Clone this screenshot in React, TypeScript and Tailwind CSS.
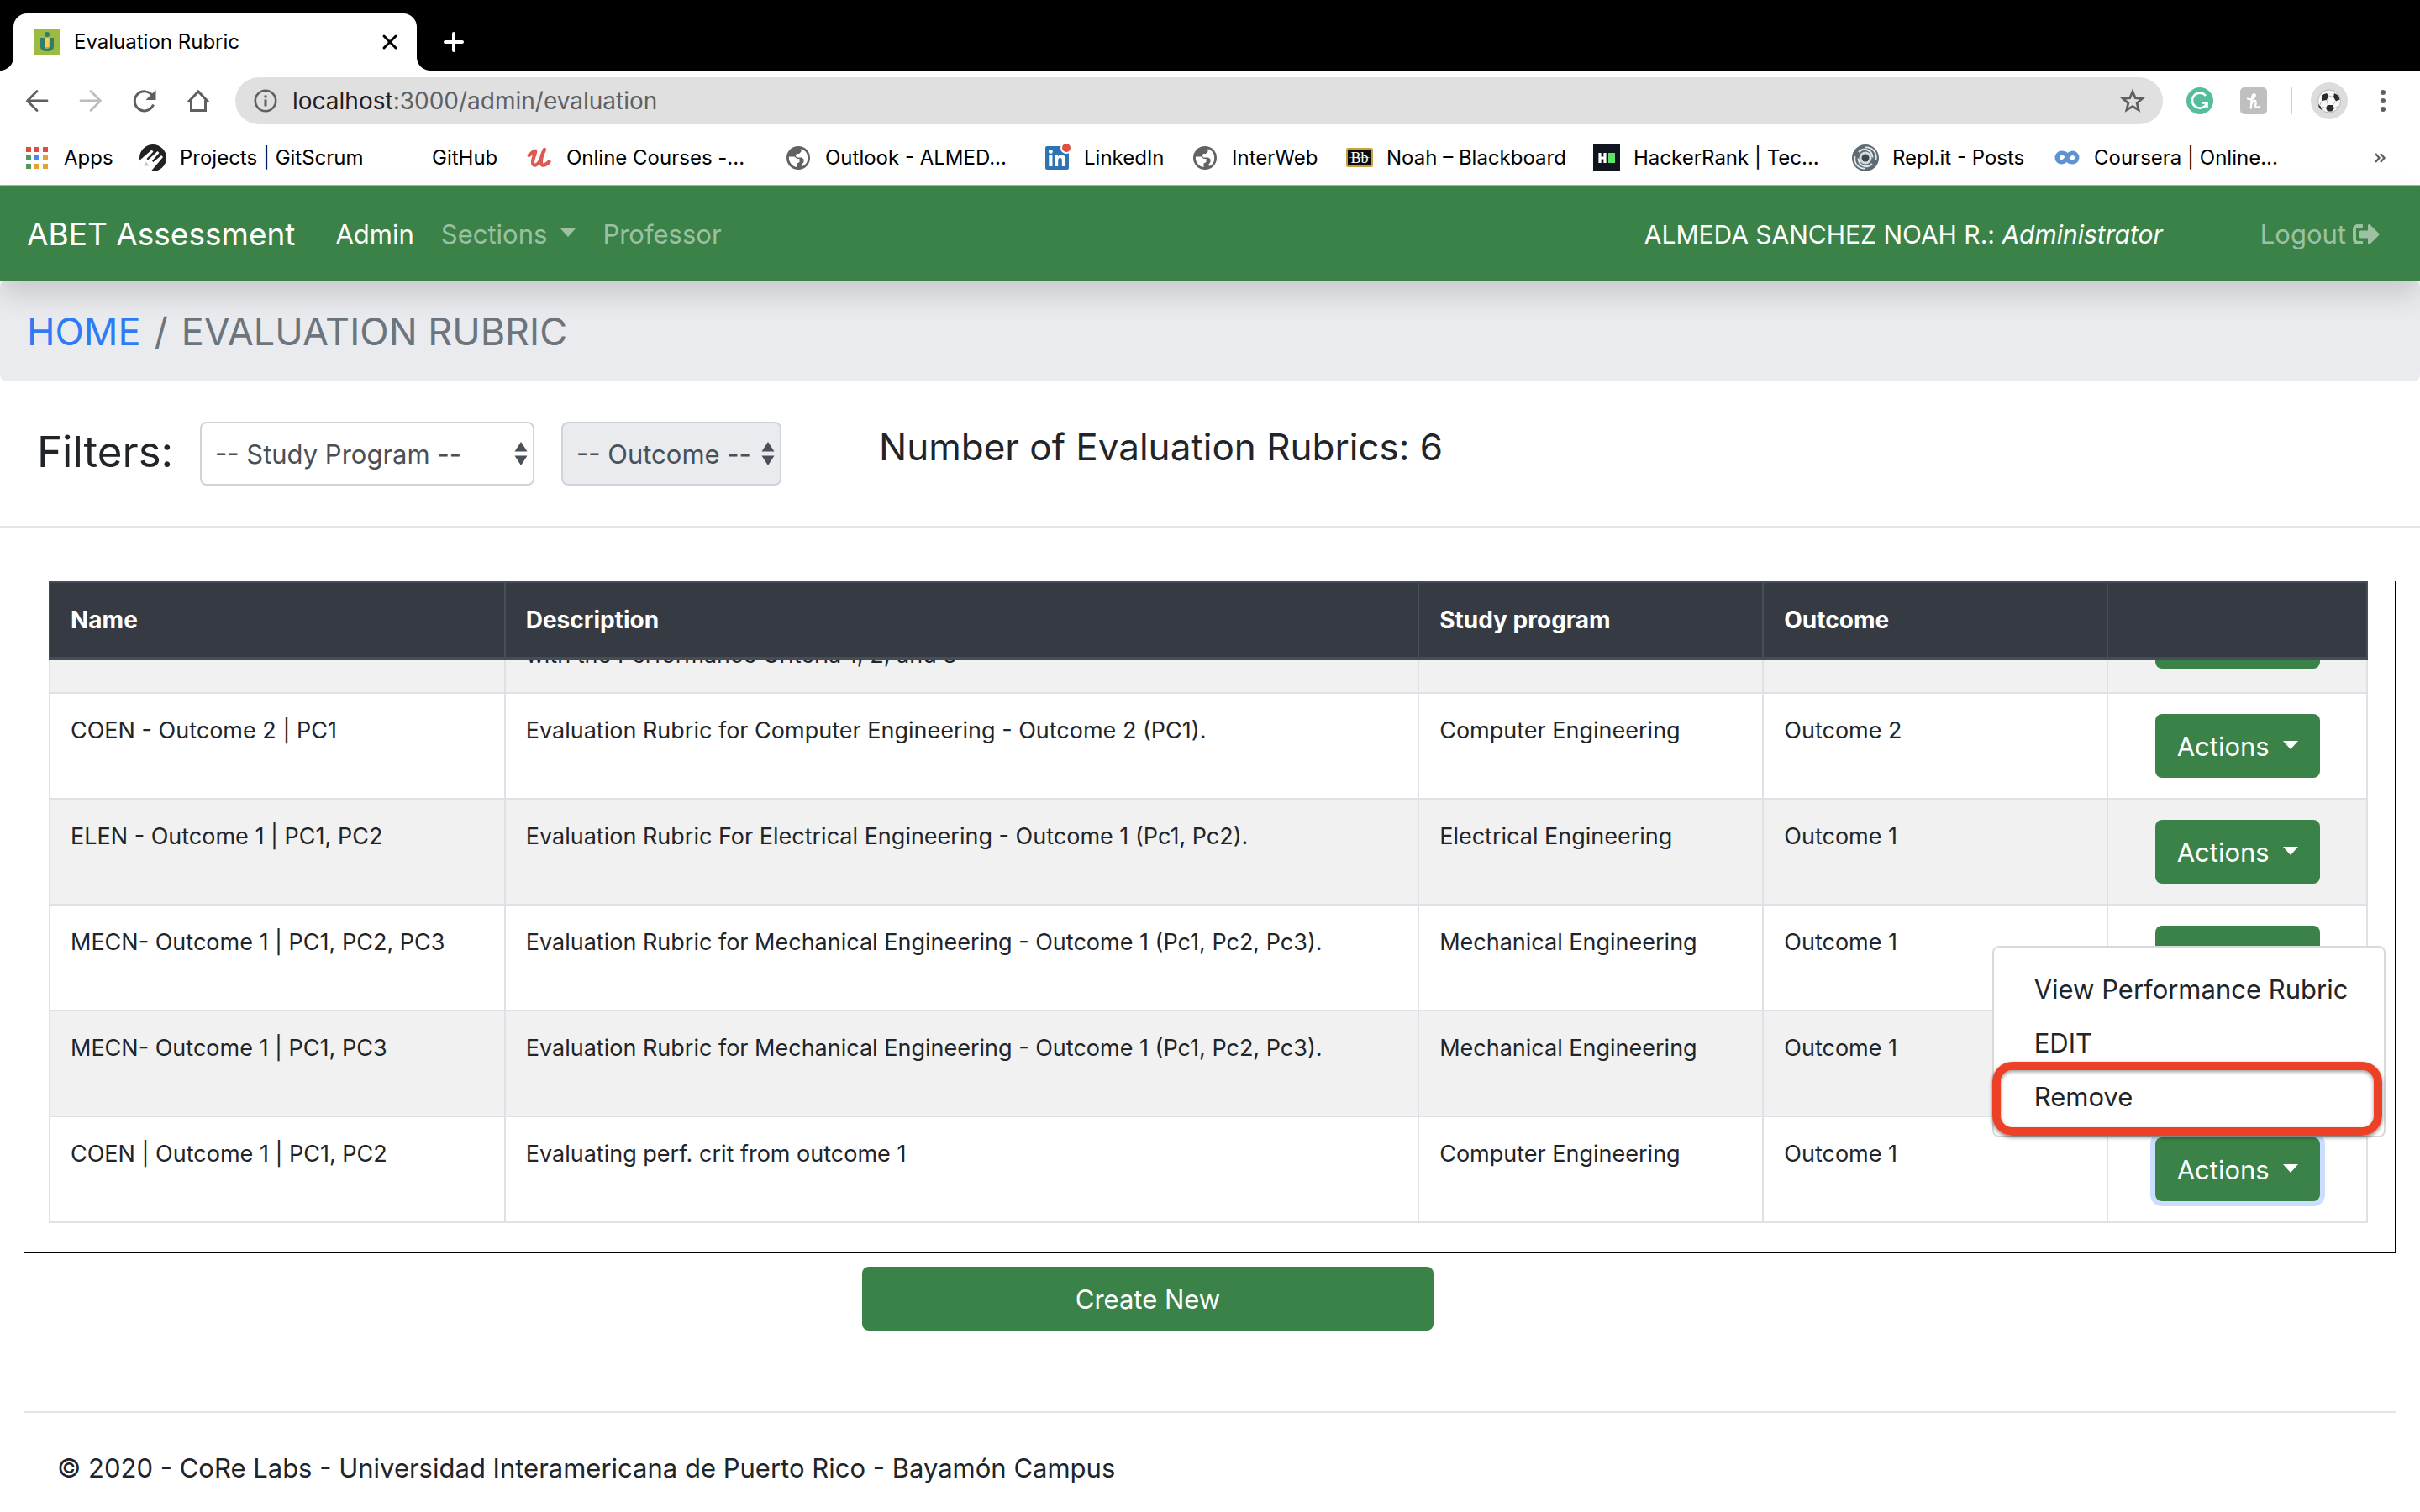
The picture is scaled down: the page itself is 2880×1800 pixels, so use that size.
import { useLayoutEffect, useRef, type ReactNode } from "react";
import { FaLinkedin, FaSignOutAlt } from "react-icons/fa";

const rows = [
  {
    id: 1,
    name: "",
    description: ["\u00a0", "with the Performance Criteria 1, 2, and 3"],
    program: "",
    outcome: "",
  },
  {
    id: 2,
    name: "COEN - Outcome 2 | PC1",
    description: ["Evaluation Rubric for Computer Engineering - Outcome 2 (PC1)."],
    program: "Computer Engineering",
    outcome: "Outcome 2",
  },
  {
    id: 3,
    name: "ELEN - Outcome 1 | PC1, PC2",
    description: ["Evaluation Rubric For Electrical Engineering - Outcome 1 (Pc1, Pc2)."],
    program: "Electrical Engineering",
    outcome: "Outcome 1",
  },
  {
    id: 4,
    name: "MECN- Outcome 1 | PC1, PC2, PC3",
    description: ["Evaluation Rubric for Mechanical Engineering - Outcome 1 (Pc1, Pc2, Pc3)."],
    program: "Mechanical Engineering",
    outcome: "Outcome 1",
  },
  {
    id: 5,
    name: "MECN- Outcome 1 | PC1, PC3",
    description: ["Evaluation Rubric for Mechanical Engineering - Outcome 1 (Pc1, Pc2, Pc3)."],
    program: "Mechanical Engineering",
    outcome: "Outcome 1",
  },
  {
    id: 6,
    name: "COEN | Outcome 1 | PC1, PC2",
    description: ["Evaluating perf. crit from outcome 1"],
    program: "Computer Engineering",
    outcome: "Outcome 1",
    open: true,
  },
];

function GlobeIcon() {
  return (
    <svg viewBox="0 0 32 32" className="size-8" aria-hidden="true">
      <circle cx="16" cy="16" r="14" fill="#626262" />
      <path d="M5 14.500h6.500l3 2.500h3v4l-3 1.500v4.500A11.200 11.200 0 0 1 5 14.500z" fill="#fff" />
      <path d="M19.500 5.300A11.200 11.200 0 0 1 21 26l-.5-2.500 2-2.500v-3.500l-2.500-2h-6l-1.500-3 2-1.500h2.500l2.500-2.500z" fill="#fff" />
    </svg>
  );
}

function AppsIcon() {
  const colors = ["#e24a3b", "#e24a3b", "#e24a3b", "#519a5b", "#4288ee", "#e4a136", "#519a5b", "#e4a136", "#e4a136"];
  return (
    <svg viewBox="0 0 32 32" className="size-8" aria-hidden="true">
      {colors.map((c, i) => (
        <rect key={i} x={3 + (i % 3) * 10} y={3 + Math.floor(i / 3) * 10} width="6" height="6" fill={c} />
      ))}
    </svg>
  );
}

function GitScrumIcon() {
  return (
    <svg viewBox="0 0 32 32" className="size-8" aria-hidden="true">
      <circle cx="16" cy="16" r="16" fill="#222" />
      <path d="M0 19 14.500 6.500l2 2L8.500 17l1.500 1.500L21.500 8l2 2L15 19.500l1.500 1.500 9.500-8 2 2L14 31.500C6 31.500 0 26 0 19z" fill="#fff" />
      <path d="M5 25.500l3-5 3 5z" fill="#c4c4c4" />
    </svg>
  );
}

function UdemyIcon() {
  return (
    <svg viewBox="0 0 32 32" className="size-8" fill="none" stroke="#dc5a52" strokeLinecap="round" aria-hidden="true">
      <path d="M3.500 13C6 11.500 8 8 10.500 7.500c2.500 0-2.500 8-2.500 13.500 0 6 6 4.500 9.500-3.500" strokeWidth="4.200" />
      <path d="M22 6c-2.500 5-4.500 12-4 16 .5 4 5 3.500 9.500-1.500" strokeWidth="4.400" />
    </svg>
  );
}

function LinkedInIcon() {
  return (
    <span className="relative flex size-8 items-center">
      <FaLinkedin className="size-8 text-[#2e74b3]" aria-hidden="true" />
      <span className="absolute -top-px right-0 size-2.5 rounded-full bg-[#de4f44] ring-2 ring-white" />
    </span>
  );
}

function BlackboardIcon() {
  return (
    <svg viewBox="0 0 32 32" className="size-8" aria-hidden="true">
      <rect x="1" y="5" width="30" height="21" rx="1.500" fill="#0c0c0c" stroke="#c9a03c" strokeWidth="2" />
      <path d="M3 15.500h26" stroke="#888" strokeWidth="1" />
      <text x="16" y="21.500" textAnchor="middle" fontSize="18" fontFamily="Liberation Serif, serif" fill="#fff">Bb</text>
    </svg>
  );
}

function HackerRankIcon() {
  return (
    <svg viewBox="0 0 32 32" className="size-8" aria-hidden="true">
      <rect width="32" height="32" fill="#0f141e" />
      <path d="M8 10v12M14 10v12M8 16h6" stroke="#fff" strokeWidth="3.200" />
      <rect x="18" y="10" width="8" height="12" fill="#62e06a" />
    </svg>
  );
}

function ReplIcon() {
  return (
    <svg viewBox="0 0 32 32" className="size-8" fill="none" aria-hidden="true">
      <circle cx="16" cy="16" r="16" fill="#5d6b75" />
      <path d="M16 3.500C24 3 30 9 28.500 18M16 28.500C8 29 2 23 3.500 14" stroke="#e6eaec" strokeWidth="1.800" />
      <path d="M8 9c6-6 16-3 16.500 6.500M24 23C18 29 8 26 7.500 16.500" stroke="#e6eaec" strokeWidth="2" />
      <circle cx="16" cy="16" r="7.500" fill="#d5d9db" />
      <circle cx="16" cy="16" r="4.500" fill="#3c464d" />
    </svg>
  );
}

function CourseraIcon() {
  return (
    <svg viewBox="0 0 32 32" className="size-8" fill="none" stroke="#5b93d3" strokeWidth="5.400" aria-hidden="true">
      <path d="M15.500 12.500C13.500 10.500 11.500 10.300 9.500 10.300a5.300 5.300 0 0 0 0 10.600c3.500 0 5-2.400 6.500-5.300s3-5.300 6.500-5.300a5.300 5.300 0 0 1 0 10.600c-2 0-4-.5-6-2.500" />
    </svg>
  );
}

const bookmarks: { label: string; width: string; icon: ReactNode }[] = [
  { label: "Apps", width: "w-[138px]", icon: <AppsIcon /> },
  { label: "Projects | GitScrum", width: "w-[300px]", icon: <GitScrumIcon /> },
  { label: "GitHub", width: "w-[160px]", icon: null },
  { label: "Online Courses -...", width: "w-[308px]", icon: <UdemyIcon /> },
  { label: "Outlook - ALMED...", width: "w-[308px]", icon: <GlobeIcon /> },
  { label: "LinkedIn", width: "w-[176px]", icon: <LinkedInIcon /> },
  { label: "InterWeb", width: "w-[184px]", icon: <GlobeIcon /> },
  { label: "Noah – Blackboard", width: "w-[294px]", icon: <BlackboardIcon /> },
  { label: "HackerRank | Tec...", width: "w-[308px]", icon: <HackerRankIcon /> },
  { label: "Repl.it - Posts", width: "w-[240px]", icon: <ReplIcon /> },
  { label: "Coursera | Online...", width: "w-[300px]", icon: <CourseraIcon /> },
];

function TabStrip() {
  return (
    <div className="flex h-[84px] items-end bg-black">
      <div className="flex h-4 w-4 shrink-0 bg-white">
        <span className="h-full w-full rounded-br-2xl bg-black" />
      </div>
      <div className="flex h-[68px] w-[480px] items-center rounded-t-2xl bg-white pl-6 pr-5">
        <svg viewBox="0 0 32 32" className="size-8" aria-hidden="true">
          <rect width="32" height="32" fill="#9dba42" />
          <path d="M8 11h5v10a3 3 0 0 0 6 0V11h5v10c0 4-3 6-8 6s-8-2-8-6z" fill="#2f7d6b" />
          <rect x="13.500" y="11" width="5" height="11" fill="#f6cf55" />
          <circle cx="16" cy="7" r="3" fill="#2f7d6b" />
        </svg>
        <span className="ml-4 flex-1 text-[24px] leading-8 text-black">Evaluation Rubric</span>
        <button type="button" aria-label="Close tab" className="flex size-6 items-center justify-center">
          <svg viewBox="0 0 24 24" className="size-6" fill="none" stroke="#000" strokeWidth="3" strokeLinecap="round" aria-hidden="true">
            <path d="M5 5l14 14M19 5L5 19" />
          </svg>
        </button>
      </div>
      <div className="flex h-4 w-4 shrink-0 bg-white">
        <span className="h-full w-full rounded-bl-2xl bg-black" />
      </div>
      <button type="button" aria-label="New tab" className="mb-[18px] ml-3 flex size-8 items-center justify-center">
        <svg viewBox="0 0 32 32" className="size-8" fill="none" stroke="#fff" strokeWidth="4" strokeLinecap="round" aria-hidden="true">
          <path d="M16 6v20M6 16h20" />
        </svg>
      </button>
    </div>
  );
}

function Toolbar() {
  return (
    <div className="flex h-[72px] items-center pl-7 pr-7">
      <div className="flex items-center gap-8">
        <button type="button" aria-label="Back">
          <svg viewBox="0 0 32 32" className="size-8" fill="none" stroke="#5f5f5f" strokeWidth="2.800" strokeLinecap="round" strokeLinejoin="round" aria-hidden="true">
            <path d="M28 16H5M16 4.500L4.500 16 16 27.500" />
          </svg>
        </button>
        <button type="button" aria-label="Forward">
          <svg viewBox="0 0 32 32" className="size-8" fill="none" stroke="#bdbdbd" strokeWidth="2.800" strokeLinecap="round" strokeLinejoin="round" aria-hidden="true">
            <path d="M4 16h23M16 4.500L27.500 16 16 27.500" />
          </svg>
        </button>
        <button type="button" aria-label="Reload">
          <svg viewBox="0 0 32 32" className="size-8" fill="none" aria-hidden="true">
            <path d="M26.500 20.500a11.500 11.500 0 1 1-1.500-11" stroke="#5f5f5f" strokeWidth="3" />
            <path d="M29.500 3v12H17.500z" fill="#5f5f5f" />
          </svg>
        </button>
        <button type="button" aria-label="Home">
          <svg viewBox="0 0 32 32" className="size-8" fill="none" stroke="#5f5f5f" strokeWidth="3" aria-hidden="true">
            <path d="M4 17.500L16 5l12 12.500M7.500 15v12.500h17V15" />
          </svg>
        </button>
      </div>
      <div className="ml-7 flex h-14 flex-1 items-center rounded-full bg-[#e0e0e0] pl-5 pr-5">
        <svg viewBox="0 0 32 32" className="size-8" fill="none" stroke="#5f5f5f" aria-hidden="true">
          <circle cx="16" cy="16" r="12.200" strokeWidth="2.600" />
          <path d="M16 14.500v8M16 9.500v3" strokeWidth="3" />
        </svg>
        <div className="relative ml-4 flex-1">
          <input
            aria-label="Address"
            readOnly
            value="localhost:3000/admin/evaluation"
            className="w-full bg-transparent text-[28px] leading-10 text-transparent outline-none"
          />
          <span aria-hidden="true" className="pointer-events-none absolute inset-0 text-[28px] leading-10 text-[#5f6164]">
            <span className="text-[#1f2023]">localhost</span>:3000/admin/evaluation
          </span>
        </div>
        <button type="button" aria-label="Bookmark this page">
          <svg viewBox="0 0 32 32" className="size-8" fill="none" stroke="#5f5f5f" strokeWidth="2.800" aria-hidden="true">
            <path d="M16 5l3.200 7.700 8.300.7-6.300 5.400 1.900 8.100-7.100-4.300-7.100 4.300 1.900-8.100-6.300-5.400 8.300-.7z" />
          </svg>
        </button>
      </div>
      <div className="ml-7 flex items-center">
        <svg viewBox="0 0 32 32" className="size-8" role="img" aria-label="Grammar extension">
          <circle cx="16" cy="16" r="16" fill="#54bd9b" />
          <path d="M23 10a9 9 0 1 0 1.500 8.500h-6M24.500 18.500V25" fill="none" stroke="#fff" strokeWidth="2.600" />
        </svg>
        <svg viewBox="0 0 32 32" className="ml-8 size-8" role="img" aria-label="Coupon extension">
          <rect width="32" height="32" rx="5" fill="#bfbfbf" />
          <path d="M9 13.500c3 1.500 6.500 0 8.200-2.500 1.500-2.500-.7-3.800-2-2-1.700 2.500-1.700 9-2.400 15.500M13.200 20c1-3 3.300-4.800 4.800-4 1.500.8.200 4 .2 6 0 2.200 2.600 2.400 5 .6" fill="none" stroke="#fff" strokeWidth="2.400" strokeLinecap="round" />
        </svg>
        <span className="ml-7 h-8 w-0.5 bg-[#d0d0d0]" />
        <svg viewBox="0 0 44 44" className="ml-[22px] size-11" role="img" aria-label="Profile">
          <circle cx="22" cy="22" r="22" fill="#dcdcdc" />
          <circle cx="22" cy="22.500" r="13.500" fill="#f7f7f7" stroke="#b5b5b5" strokeWidth="1" />
          <path d="M13 15l6-2 2 3-2 5-6 1zM28 13l5 2.500 1.500 5-4.500 2-3-5zM20 27h6l2 4-3 3.500h-5l-2-4zM9 26l3 3 1 4-3-2.500z" fill="#2b2b2b" />
          <path d="M21 16l6.500 1.500M19 21l1.500 6M30 22.500L26.500 27M12.500 22.500L11 27M18 30.500l-5-1M28 31l4-2" stroke="#b5b5b5" strokeWidth="1" />
        </svg>
        <button type="button" aria-label="Browser menu" className="ml-[26px]">
          <svg viewBox="0 0 32 32" className="size-8" fill="#5f5f5f" aria-hidden="true">
            <circle cx="16" cy="6" r="3" />
            <circle cx="16" cy="16" r="3" />
            <circle cx="16" cy="26" r="3" />
          </svg>
        </button>
      </div>
    </div>
  );
}

function BookmarksBar() {
  return (
    <div className="flex h-[66px] items-center border-b-2 border-[#b0b0b0] pl-7 pr-10">
      <ul className="flex flex-1 items-center">
        {bookmarks.map((b) => (
          <li key={b.label} className={b.width}>
            <a href="#" className="flex items-center gap-4 whitespace-nowrap text-[24px] leading-8 text-black">
              <span className="size-8 shrink-0">{b.icon}</span>
              {b.label}
            </a>
          </li>
        ))}
      </ul>
      <button type="button" aria-label="More bookmarks">
        <svg viewBox="0 0 16 16" className="size-4" fill="none" stroke="#5f5f5f" strokeWidth="2.400" aria-hidden="true">
          <path d="M3 3l4.500 5L3 13M9 3l4.500 5L9 13" />
        </svg>
      </button>
    </div>
  );
}

function Caret() {
  return <span className="mb-1 border-x-[9px] border-t-10 border-x-transparent border-t-current" />;
}

function Navbar() {
  return (
    <nav className="relative z-10 flex h-28 items-center bg-[#3a8247] px-8 pt-0.5 text-[31px] leading-[48px] text-white shadow-[0_16px_32px_rgba(0,0,0,0.15)]">
      <a href="#" className="text-[37px] leading-[60px]">ABET Assessment</a>
      <a href="#" className="ml-12">Admin</a>
      <button type="button" className="ml-8 flex items-center gap-4 text-white/50">
        Sections
        <Caret />
      </button>
      <a href="#" className="ml-8 text-white/50">Professor</a>
      <span className="ml-auto text-[30px]">
        ALMEDA SANCHEZ NOAH R.: <em>Administrator</em>
      </span>
      <a href="#" className="ml-[116px] mr-4 flex items-center gap-2 text-white/50">
        Logout
        <FaSignOutAlt className="size-8" aria-hidden="true" />
      </a>
    </nav>
  );
}

function FilterSelect({ label, option, width, disabled }: { label: string; option: string; width: string; disabled?: boolean }) {
  return (
    <div className={`relative ${width}`}>
      <select
        aria-label={label}
        disabled={disabled}
        className="h-[76px] w-full appearance-none rounded-lg border-2 border-[#ced4da] bg-white pl-4 pt-0.5 text-[31px] leading-[48px] text-[#495057] opacity-100 disabled:bg-[#e9ebef]"
      >
        <option>{option}</option>
      </select>
      <svg viewBox="0 0 16 28" className="pointer-events-none absolute right-2 top-6 h-7 w-4" fill="#495057" aria-hidden="true">
        <path d="M8 0l7.500 11.500H.5zM8 28l7.500-11.500H.5z" />
      </svg>
    </div>
  );
}

function ActionsButton({ open }: { open?: boolean }) {
  return (
    <div className="relative inline-flex">
      <button
        type="button"
        aria-haspopup="menu"
        aria-expanded={!!open}
        className={`flex h-[76px] w-[196px] items-center justify-center gap-4 rounded-lg bg-[#3a8247] pt-0.5 text-[31px] leading-[48px] text-white ${open ? "ring-6 ring-[#cbdeff]" : ""}`}
      >
        Actions
        <Caret />
      </button>
      {open && (
        <ul
          role="menu"
          className="absolute -right-[78px] bottom-full z-10 w-[468px] rounded-lg border-2 border-[#d9d9d9] bg-white py-4 text-left text-[31px] leading-[48px] text-[#212529]"
        >
          <li>
            <button type="button" role="menuitem" className="w-full whitespace-nowrap px-12 pb-1.5 pt-2.5 text-left">View Performance Rubric</button>
          </li>
          <li>
            <button type="button" role="menuitem" className="w-full px-12 pb-1.5 pt-2.5 text-left">EDIT</button>
          </li>
          <li className="relative">
            <button type="button" role="menuitem" className="w-full px-12 pb-1.5 pt-2.5 text-left">Remove</button>
            <span className="pointer-events-none absolute -bottom-4 -left-0.5 -top-2 right-0.5 rounded-3xl border-10 border-[#ec4126] shadow-[0_2px_4px_rgba(0,0,0,0.5),inset_0_2px_4px_rgba(0,0,0,0.4)]" />
          </li>
        </ul>
      )}
    </div>
  );
}

function RubricTable() {
  const scroller = useRef<HTMLDivElement>(null);
  useLayoutEffect(() => {
    const el = scroller.current;
    if (el) el.scrollTop = el.scrollHeight;
  }, []);
  return (
    <div
      ref={scroller}
      className="ml-7 mr-7 mt-16 h-[800px] overflow-y-auto border-b-2 border-r-2 border-black pb-[34px] pl-[30px] pr-8 [scrollbar-width:none]"
    >
      <table className="w-full table-fixed border-separate border-spacing-0 text-left text-[27px] leading-10 text-[#212529]">
        <colgroup>
          <col className="w-[19.7%]" />
          <col className="w-[39.4%]" />
          <col className="w-[14.86%]" />
          <col className="w-[14.86%]" />
          <col />
        </colgroup>
        <thead className="sticky top-0 z-10 bg-[#363a42] text-white">
          <tr>
            {["Name", "Description", "Study program", "Outcome", ""].map((h) => (
              <th key={h} className="h-[94px] border-b-4 border-r-2 border-t-2 border-[#474d56] px-6 text-[28px] font-bold first:border-l-2">
                {h}
              </th>
            ))}
          </tr>
        </thead>
        <tbody className="align-top">
          {rows.map((r) => (
            <tr key={r.id} className="odd:bg-[#f1f1f1] even:bg-white">
              <td className="border-b-2 border-l-2 border-r-2 border-[#dee2e6] px-6 py-6">{r.name}</td>
              <td className="border-b-2 border-r-2 border-[#dee2e6] px-6 py-6">
                {r.description.map((line) => (
                  <p key={line}>{line}</p>
                ))}
              </td>
              <td className="border-b-2 border-r-2 border-[#dee2e6] px-6 py-6">{r.program}</td>
              <td className="border-b-2 border-r-2 border-[#dee2e6] px-6 py-6">{r.outcome}</td>
              <td className="border-b-2 border-r-2 border-[#dee2e6] py-6 text-center">
                <div className="flex justify-center">
                  <ActionsButton open={r.open} />
                </div>
              </td>
            </tr>
          ))}
        </tbody>
      </table>
    </div>
  );
}

export default function App() {
  return (
    <div className="min-h-screen bg-white font-[Inter,'Liberation_Sans',sans-serif] text-[#212529]">
      <header>
        <TabStrip />
        <Toolbar />
        <BookmarksBar />
      </header>
      <Navbar />
      <main>
        <ol className="flex h-[120px] items-center gap-4 rounded-lg bg-[#e9ebef] px-8 pt-0.5 text-[45px] leading-[72px] text-[#6c757d]">
          <li>
            <a href="#" className="text-[#2f7bf6]">HOME</a>
          </li>
          <li aria-hidden="true">/</li>
          <li aria-current="page">EVALUATION RUBRIC</li>
        </ol>
        <section className="flex h-[174px] items-start border-b-2 border-[#e5e5e5] pl-11 pt-12">
          <h3 className="w-[194px] text-[51px] leading-[72px]">Filters:</h3>
          <FilterSelect label="Study program" option="-- Study Program --" width="w-[398px]" />
          <div className="w-8" />
          <FilterSelect label="Outcome" option="-- Outcome --" width="w-[262px]" disabled />
          <h4 className="ml-[116px] text-[44px] leading-[60px]">Number of Evaluation Rubrics: 6</h4>
        </section>
        <RubricTable />
        <div className="mt-4 flex justify-center pr-[148px]">
          <button type="button" className="h-[76px] w-[680px] rounded-lg bg-[#3a8247] pt-0.5 text-[31px] leading-[48px] text-white">
            Create New
          </button>
        </div>
      </main>
      <footer className="mx-7 mt-24 border-t-2 border-[#e5e5e5] px-10 pt-[42px] text-[31px] leading-[48px]">
        © 2020 - CoRe Labs - Universidad Interamericana de Puerto Rico - Bayamón Campus
      </footer>
    </div>
  );
}
